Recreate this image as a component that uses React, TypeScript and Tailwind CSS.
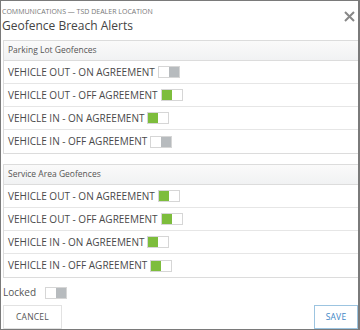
import React, { useState } from 'react';

type Row = { label: string; on: boolean };

const Toggle: React.FC<{ on: boolean; onClick?: () => void }> = ({ on, onClick }) => (
  <button
    onClick={onClick}
    className="ml-[3px] flex h-[12px] w-[22px] shrink-0 border border-[#d6d6d6] bg-white p-0"
  >
    {on ? (
      <span className="h-full w-[10px] bg-[#7dbd3c]" />
    ) : (
      <span className="ml-auto h-full w-[10px] bg-[#b7bbbe]" />
    )}
  </button>
);

const Section: React.FC<{ title: string; rows: Row[] }> = ({ title, rows }) => {
  const [state, setState] = useState(rows.map(r => r.on));
  return (
    <div className="ml-[2px] border border-r-0 border-[#dcdcdc]">
      <div className="flex h-[20px] items-center border-b border-[#dcdcdc] bg-gradient-to-b from-[#fafafa] to-[#f1f2f3] px-[4px] text-[8.5px] text-[#555]">
        {title}
      </div>
      {rows.map((row, i) => (
        <div
          key={row.label}
          className="flex h-[23px] items-center border-b border-[#e6e6e6] px-[4px] text-[10px] text-[#4a4a4a] last:border-b-0"
        >
          <span>{row.label}</span>
          <Toggle on={state[i]} onClick={() => setState(s => s.map((v, j) => (j === i ? !v : v)))} />
        </div>
      ))}
    </div>
  );
};

export default function App() {
  const parking: Row[] = [
    { label: 'VEHICLE OUT - ON AGREEMENT', on: false },
    { label: 'VEHICLE OUT - OFF AGREEMENT', on: true },
    { label: 'VEHICLE IN - ON AGREEMENT', on: true },
    { label: 'VEHICLE IN - OFF AGREEMENT', on: false }
  ];
  const service: Row[] = [
    { label: 'VEHICLE OUT - ON AGREEMENT', on: true },
    { label: 'VEHICLE OUT - OFF AGREEMENT', on: true },
    { label: 'VEHICLE IN - ON AGREEMENT', on: true },
    { label: 'VEHICLE IN - OFF AGREEMENT', on: true }
  ];

  return (
    <div
      className="h-[330px] w-[360px] overflow-hidden border-t border-l border-r-2 border-b border-[#7a7a7a] bg-white"
      style={{ fontFamily: '"Open Sans", "Liberation Sans", sans-serif' }}
    >
      {/* Header */}
      <div className="flex items-start justify-between pt-[6px] pl-[1px] pr-[3px]">
        <div>
          <div className="text-[7px] leading-[9px] text-[#777]">COMMUNICATIONS — TSD DEALER LOCATION</div>
          <div className="mt-[2px] text-[12px] leading-[15px] text-[#444]">Geofence Breach Alerts</div>
        </div>
        <button className="mt-[4px] text-[#888]">
          <svg width="11" height="11" viewBox="0 0 11 11">
            <path d="M1 1L10 10M10 1L1 10" stroke="currentColor" strokeWidth="2" />
          </svg>
        </button>
      </div>

      <div className="mt-[7px] space-y-[10px]">
        <Section title="Parking Lot Geofences" rows={parking} />
        <Section title="Service Area Geofences" rows={service} />
      </div>

      {/* Locked */}
      <div className="mt-[7px] flex items-center pl-[2px] text-[10px] text-[#555]">
        <span>Locked</span>
        <span className="ml-[6px]">
          <Toggle on={false} />
        </span>
      </div>

      {/* Footer */}
      <div className="mt-[5px] flex justify-between pl-[2px]">
        <button className="h-[24px] w-[59px] border border-[#e2e2e2] text-[8.5px] tracking-wide text-[#555]">
          CANCEL
        </button>
        <button className="h-[24px] w-[44px] border border-[#9cc4e0] text-[8.5px] tracking-wide text-[#3d86c6]">
          SAVE
        </button>
      </div>
    </div>
  );
}
